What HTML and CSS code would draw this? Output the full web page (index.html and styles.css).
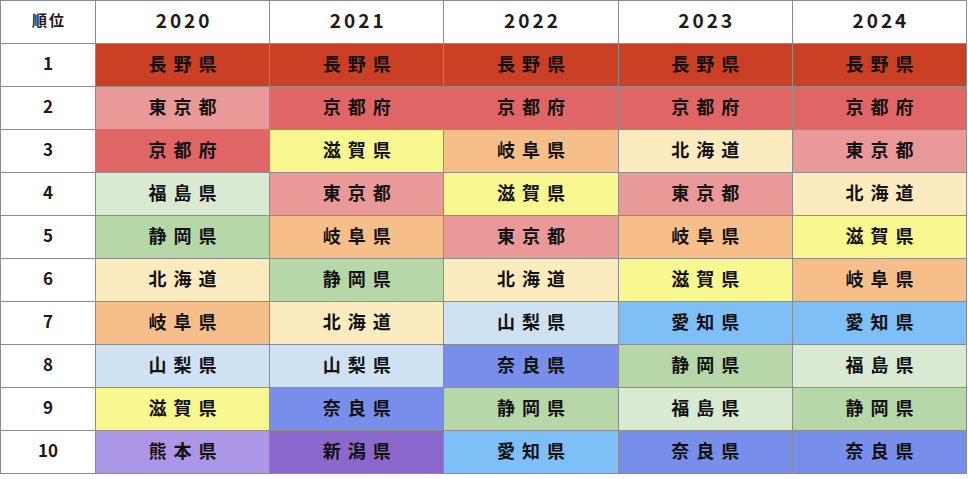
FILE: index.html
```html
<!DOCTYPE html>
<html lang="ja">
<head>
<meta charset="utf-8">
<title>順位</title>
<link rel="stylesheet" href="styles.css">
</head>
<body>
<div class="grid">
  <div class="cell head rank-head">順位</div>
  <div class="cell head year">2020</div>
  <div class="cell head year">2021</div>
  <div class="cell head year">2022</div>
  <div class="cell head year">2023</div>
  <div class="cell head year">2024</div>

  <div class="cell rank">1</div>
  <div class="cell pref c-nagano">長野県</div>
  <div class="cell pref c-nagano">長野県</div>
  <div class="cell pref c-nagano">長野県</div>
  <div class="cell pref c-nagano">長野県</div>
  <div class="cell pref c-nagano">長野県</div>

  <div class="cell rank">2</div>
  <div class="cell pref c-tokyo">東京都</div>
  <div class="cell pref c-kyoto">京都府</div>
  <div class="cell pref c-kyoto">京都府</div>
  <div class="cell pref c-kyoto">京都府</div>
  <div class="cell pref c-kyoto">京都府</div>

  <div class="cell rank">3</div>
  <div class="cell pref c-kyoto">京都府</div>
  <div class="cell pref c-shiga">滋賀県</div>
  <div class="cell pref c-gifu">岐阜県</div>
  <div class="cell pref c-hokkaido">北海道</div>
  <div class="cell pref c-tokyo">東京都</div>

  <div class="cell rank">4</div>
  <div class="cell pref c-fukushima">福島県</div>
  <div class="cell pref c-tokyo">東京都</div>
  <div class="cell pref c-shiga">滋賀県</div>
  <div class="cell pref c-tokyo">東京都</div>
  <div class="cell pref c-hokkaido">北海道</div>

  <div class="cell rank">5</div>
  <div class="cell pref c-shizuoka">静岡県</div>
  <div class="cell pref c-gifu">岐阜県</div>
  <div class="cell pref c-tokyo">東京都</div>
  <div class="cell pref c-gifu">岐阜県</div>
  <div class="cell pref c-shiga">滋賀県</div>

  <div class="cell rank">6</div>
  <div class="cell pref c-hokkaido">北海道</div>
  <div class="cell pref c-shizuoka">静岡県</div>
  <div class="cell pref c-hokkaido">北海道</div>
  <div class="cell pref c-shiga">滋賀県</div>
  <div class="cell pref c-gifu">岐阜県</div>

  <div class="cell rank">7</div>
  <div class="cell pref c-gifu">岐阜県</div>
  <div class="cell pref c-hokkaido">北海道</div>
  <div class="cell pref c-yamanashi">山梨県</div>
  <div class="cell pref c-aichi">愛知県</div>
  <div class="cell pref c-aichi">愛知県</div>

  <div class="cell rank">8</div>
  <div class="cell pref c-yamanashi">山梨県</div>
  <div class="cell pref c-yamanashi">山梨県</div>
  <div class="cell pref c-nara">奈良県</div>
  <div class="cell pref c-shizuoka">静岡県</div>
  <div class="cell pref c-fukushima">福島県</div>

  <div class="cell rank">9</div>
  <div class="cell pref c-shiga">滋賀県</div>
  <div class="cell pref c-nara">奈良県</div>
  <div class="cell pref c-shizuoka">静岡県</div>
  <div class="cell pref c-fukushima">福島県</div>
  <div class="cell pref c-shizuoka">静岡県</div>

  <div class="cell rank">10</div>
  <div class="cell pref c-kumamoto">熊本県</div>
  <div class="cell pref c-niigata">新潟県</div>
  <div class="cell pref c-aichi">愛知県</div>
  <div class="cell pref c-nara">奈良県</div>
  <div class="cell pref c-nara">奈良県</div>
</div>
</body>
</html>
```

FILE: styles.css
```css
html, body {
  margin: 0;
  padding: 0;
  background: #ffffff;
}

.grid {
  box-sizing: border-box;
  width: 967px;
  display: grid;
  grid-template-columns: 94px repeat(5, 1fr);
  grid-auto-rows: 42px;
  gap: 1px;
  padding: 1px;
  background: #8c8c8c;
  font-family: "Noto Sans CJK JP", "Noto Sans", sans-serif;
}

.cell {
  box-sizing: border-box;
  display: flex;
  align-items: center;
  justify-content: center;
  padding-bottom: 5px;
  background: #ffffff;
  color: #231815;
  font-weight: 700;
}

.rank-head {
  font-size: 15px;
  letter-spacing: 2px;
  padding-left: 2px;
}

.year {
  font-size: 19px;
  letter-spacing: 3px;
  padding-left: 3px;
}

.rank {
  font-size: 17px;
}

.pref {
  font-size: 18px;
  letter-spacing: 7px;
  padding-left: 7px;
  color: #111111;
}

.c-nagano { background: #cb3f25; }
.c-tokyo { background: #ea9999; }
.c-kyoto { background: #e06666; }
.c-shiga { background: #f8f790; }
.c-gifu { background: #f6bf89; }
.c-hokkaido { background: #fcebbf; }
.c-fukushima { background: #d9ead3; }
.c-shizuoka { background: #b6d7a8; }
.c-yamanashi { background: #cfe2f3; }
.c-aichi { background: #7ebff7; }
.c-nara { background: #778eea; }
.c-kumamoto { background: #ac96e6; }
.c-niigata { background: #8a68cc; }
```
